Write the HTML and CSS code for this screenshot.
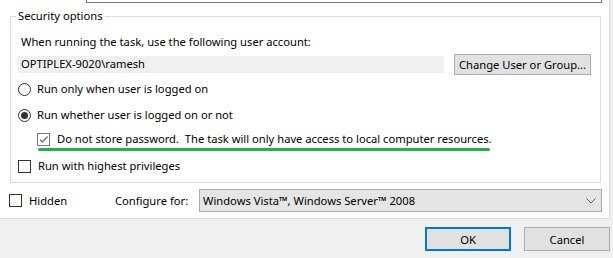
FILE: index.html
```html
<!DOCTYPE html>
<html lang="en">
<head>
  <meta charset="UTF-8">
  <title>Task Properties</title>
  <link rel="stylesheet" href="styles.css">
</head>
<body>

  <div class="tab-page">
    <!-- bottom of the description box -->
    <div class="desc-box"></div>

    <fieldset class="group">
      <legend>Security options</legend>
      <div class="account-label">When running the task, use the following user account:</div>
      <div class="account-row">
        <div class="account-field">OPTIPLEX-9020\ramesh</div>
        <button class="btn change-btn">Change User or Group...</button>
      </div>

      <label class="option first">
        <span class="radio"></span>Run only when user is logged on
      </label>
      <label class="option">
        <span class="radio checked"></span>Run whether user is logged on or not
      </label>
      <label class="option sub">
        <span class="check dim">
          <svg width="11" height="11" viewBox="0 0 11 11"><polyline points="2,5.5 4.5,8 9.5,2.5" fill="none" stroke="#6f6f6f" stroke-width="1.3"/></svg>
        </span>Do not store password.&nbsp; The task will only have access to local computer resources.
      </label>
      <div class="highlight"></div>
      <label class="option last">
        <span class="check"></span>Run with highest privileges
      </label>
    </fieldset>

    <div class="bottom-row">
      <label class="option hidden-opt"><span class="check"></span>Hidden</label>
      <span class="configure-label">Configure for:</span>
      <div class="combo">
        <span>Windows Vista™, Windows Server™ 2008</span>
        <svg width="10" height="6" viewBox="0 0 10 6"><polyline points="0.5,0.5 5,5 9.5,0.5" fill="none" stroke="#606060" stroke-width="1"/></svg>
      </div>
    </div>
  </div>

  <div class="dialog-buttons">
    <button class="btn ok-btn">OK</button>
    <button class="btn">Cancel</button>
  </div>

</body>
</html>
```

FILE: styles.css
```css
* {
  box-sizing: border-box;
}
body {
  margin: 0;
  background-color: #f0f0f0;
  font-family: "Noto Sans", sans-serif;
  font-size: 11.2px;
  line-height: 16px;
  color: #000;
}
.tab-page {
  width: 610px;
  background-color: #fff;
  border-right: 1px solid #dadada;
  border-bottom: 1px solid #dadada;
  padding-bottom: 6px;
}
.desc-box {
  margin-left: 86px;
  width: 516px;
  height: 3px;
  border: 1px solid #7a7a7a;
  border-top: none;
}
.group {
  margin: 5px 0 0 10px;
  width: 591px;
  padding: 10px 9px 8px 7px;
  border: 1px solid #dcdcdc;
}
.group legend {
  margin-left: -2px;
  padding: 0 2px;
}
.account-label {
  padding-left: 3px;
}
.account-row {
  display: flex;
  align-items: center;
  gap: 10px;
  margin-top: 4px;
  height: 21px;
}
.account-field {
  width: 426px;
  height: 17px;
  padding-left: 3px;
  background-color: #f0f0f0;
}
.btn {
  font-family: inherit;
  font-size: 11.2px;
  color: #000;
  background-color: #e1e1e1;
  border: 1px solid #adadad;
  padding: 0;
}
.change-btn {
  width: 137px;
  height: 21px;
}
.option {
  display: flex;
  align-items: center;
  gap: 7px;
  height: 16px;
  margin-top: 10px;
}
.option.first {
  margin-top: 6px;
}
.option.sub {
  margin-top: 8px;
  padding-left: 19px;
}
.option.last {
  margin-top: 7px;
}
.radio {
  width: 13px;
  height: 13px;
  border: 1px solid #333;
  border-radius: 50%;
  display: flex;
  align-items: center;
  justify-content: center;
  margin-right: -1px;
}
.radio.checked::after {
  content: "";
  width: 7px;
  height: 7px;
  border-radius: 50%;
  background-color: #333;
}
.check {
  width: 13px;
  height: 13px;
  border: 1px solid #333;
  display: flex;
  align-items: center;
  justify-content: center;
}
.check.dim {
  border-color: #7a7a7a;
}
.highlight {
  margin: 1px 0 0 20px;
  width: 452px;
  height: 3px;
  border-radius: 2px;
  background-color: #22b14c;
}
.bottom-row {
  display: flex;
  align-items: center;
  margin-top: 6px;
  padding-left: 9px;
  height: 23px;
}
.hidden-opt {
  width: 106px;
  margin-top: 0;
}
.configure-label {
  width: 84px;
}
.combo {
  width: 403px;
  height: 23px;
  display: flex;
  align-items: center;
  justify-content: space-between;
  padding: 0 5px 0 3px;
  background-color: #e5e5e5;
  border: 1px solid #acacac;
}
.dialog-buttons {
  display: flex;
  justify-content: flex-end;
  gap: 13px;
  padding: 8px 3px 0 0;
}
.dialog-buttons .btn {
  width: 86px;
  height: 24px;
}
.ok-btn {
  border: 2px solid #0078d7;
}
```
